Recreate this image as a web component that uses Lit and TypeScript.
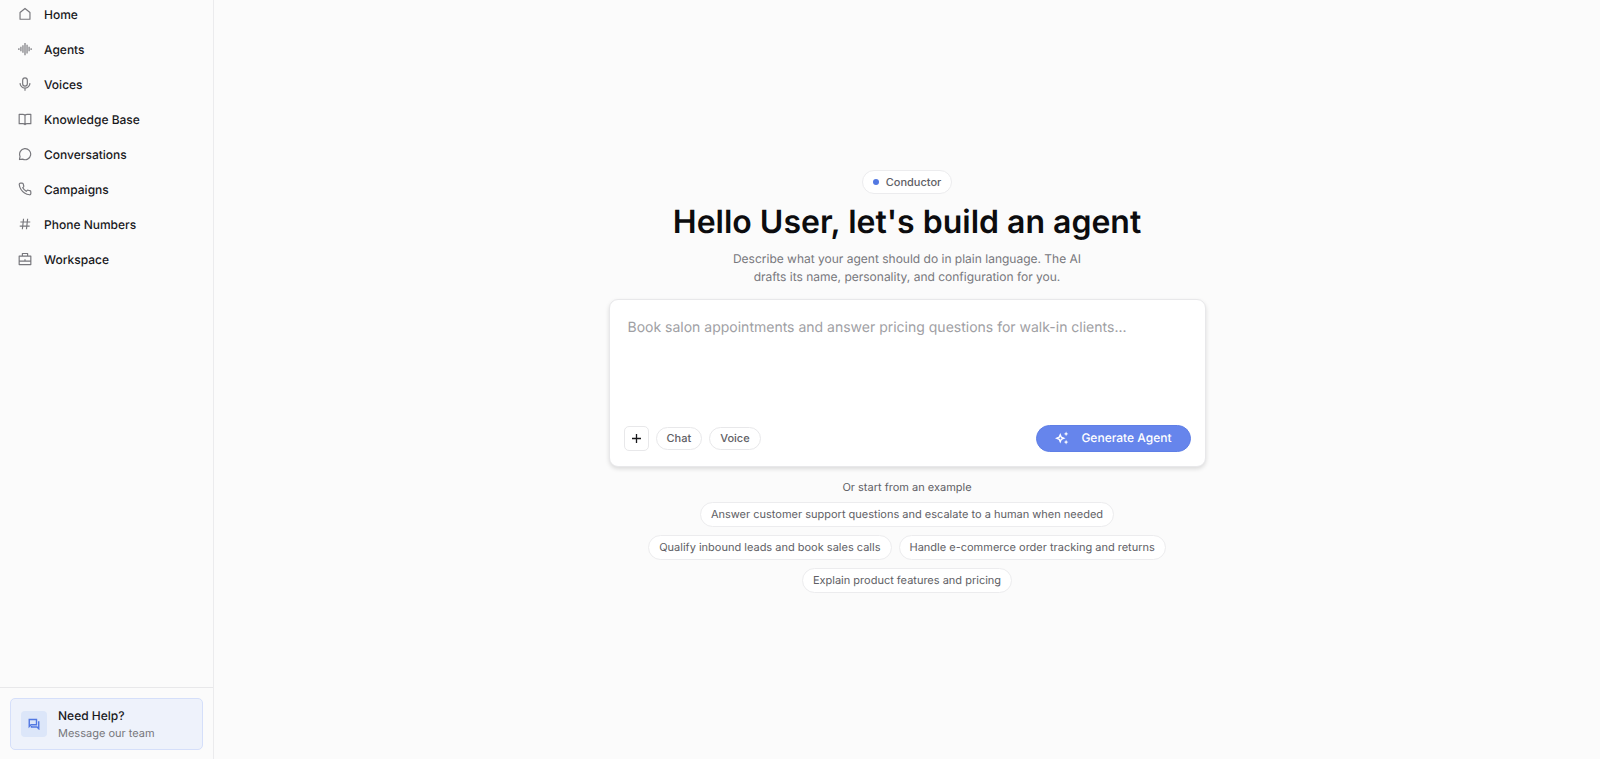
import { LitElement, html, css, svg } from "lit";
import { customElement, state } from "lit/decorators.js";

const icons = {
  home: svg`<path d="M3.500 21V9.500L12 2.500l8.500 7V21Z" />`,
  agents: svg`<path d="M1.500 10.500v3M5 8v8M8.500 5.500v13M12 1.500v21M15.500 4.500v15M19 8v8M22.500 10.500v3" />`,
  voices: svg`<rect x="8" y="1.500" width="8" height="14" rx="4" /><path d="M3.500 10.500a8.500 8.500 0 0 0 17 0M12 19v4.500" />`,
  book: svg`<path d="M12 21.500c-1-1.200-2-1.500-3.500-1.500H2V4h6.500C10.500 4 12 5 12 6.500C12 5 13.500 4 15.500 4H22v16h-6.500c-1.500 0-2.500.300-3.500 1.500ZM12 6.500v14" />`,
  chat: svg`<path d="M2.500 21.500 3.500 16A9.500 9.500 0 1 1 8 20.800Z" />`,
  phone: svg`<path d="M22 16.920v3a2 2 0 0 1-2.180 2 19.790 19.790 0 0 1-8.630-3.070 19.500 19.500 0 0 1-6-6 19.790 19.790 0 0 1-3.070-8.670A2 2 0 0 1 4.110 2h3a2 2 0 0 1 2 1.720 12.840 12.840 0 0 0 .7 2.810 2 2 0 0 1-.45 2.110L8.090 9.910a16 16 0 0 0 6 6l1.270-1.270a2 2 0 0 1 2.110-.45 12.840 12.840 0 0 0 2.810.7A2 2 0 0 1 22 16.920Z" />`,
  hash: svg`<path d="M9.500 3 7.500 21M16.500 3l-2 18M4 8.500h17M3 15.500h17" />`,
  case: svg`<path d="M2 7h20v14.500H2ZM7.500 7V2.500h9V7M2 15.500h20M12 12.500v3" />`,
};

const nav: [keyof typeof icons, string][] = [
  ["home", "Home"],
  ["agents", "Agents"],
  ["voices", "Voices"],
  ["book", "Knowledge Base"],
  ["chat", "Conversations"],
  ["phone", "Campaigns"],
  ["hash", "Phone Numbers"],
  ["case", "Workspace"],
];

const examples = [
  "Answer customer support questions and escalate to a human when needed",
  "Qualify inbound leads and book sales calls",
  "Handle e-commerce order tracking and returns",
  "Explain product features and pricing",
];

@customElement("app-sidebar")
export class AppSidebar extends LitElement {
  static styles = css`
    :host {
      display: flex;
      flex-direction: column;
      justify-content: space-between;
      box-sizing: border-box;
      border-right: 1px solid #ebebed;
    }
    .nav {
      display: flex;
      flex-direction: column;
      gap: 7px;
      padding: 0 10px;
    }
    .link {
      display: flex;
      align-items: center;
      gap: 12px;
      height: 28px;
      padding: 0 8px;
      border-radius: 6px;
      color: #18181b;
      font-size: 12px;
      font-weight: 500;
      text-decoration: none;
    }
    .icon {
      width: 14px;
      height: 14px;
      fill: none;
      stroke: #77777c;
      stroke-width: 2;
      stroke-linejoin: round;
    }
    .footer {
      padding: 10px 10px 9px;
      border-top: 1px solid #e8e8ea;
    }
    .help {
      display: flex;
      align-items: center;
      gap: 11px;
      padding: 8px 10px;
      border: 1px solid #d5dffa;
      border-radius: 5px;
      background: #eef2fb;
      color: #18181b;
      text-decoration: none;
    }
    .tile {
      display: grid;
      place-items: center;
      width: 26px;
      height: 26px;
      border-radius: 4px;
      background: #dce6f9;
    }
    .tile-icon {
      width: 12px;
      height: 12px;
      fill: none;
      stroke: #5278e2;
      stroke-width: 2.8;
    }
    .help-text {
      display: flex;
      flex-direction: column;
    }
    .help-title {
      font-size: 12px;
      font-weight: 500;
      line-height: 18px;
    }
    .help-sub {
      color: #77777c;
      font-size: 11px;
      line-height: 16px;
    }
  `;

  render() {
    return html`
      <nav class="nav" aria-label="Main">
        ${nav.map(
          ([icon, label]) => html`<a class="link" href="#">
            <svg class="icon" viewBox="0 0 24 24" aria-hidden="true">${icons[icon]}</svg>${label}
          </a>`
        )}
      </nav>
      <div class="footer">
        <a class="help" href="#">
          <span class="tile">
            <svg class="tile-icon" viewBox="0 0 24 24" aria-hidden="true">
              <path d="M2.500 17V3H17v10.500H6Z" />
              <path d="M20 8h1.500v13.500L18 18H7v-2" />
            </svg>
          </span>
          <span class="help-text">
            <span class="help-title">Need Help?</span>
            <span class="help-sub">Message our team</span>
          </span>
        </a>
      </div>
    `;
  }
}

@customElement("agent-composer")
export class AgentComposer extends LitElement {
  @state() prompt = "";

  static styles = css`
    :host {
      display: block;
    }
    .card {
      display: flex;
      flex-direction: column;
      border: 1px solid #e8e8ea;
      border-radius: 9px;
      background: #fff;
      box-shadow: 0 2px 4px rgba(0, 0, 0, 0.13);
    }
    .input {
      height: 93px;
      box-sizing: content-box;
      padding: 18px 18px 0;
      border: 0;
      outline: 0;
      resize: none;
      background: none;
      color: #18181b;
      font: 400 14px/20px Inter, sans-serif;
      text-rendering: geometricPrecision;
    }
    .input::placeholder {
      color: #a0a0a4;
    }
    .bar {
      display: flex;
      align-items: center;
      gap: 7px;
      padding: 14px;
    }
    button {
      display: flex;
      align-items: center;
      justify-content: center;
      box-sizing: border-box;
      margin: 0;
      border: 1px solid #e8e8ea;
      background: #fff;
      font: 500 11px/16px Inter, sans-serif;
      text-rendering: geometricPrecision;
      color: #606065;
    }
    .add {
      width: 25px;
      height: 25px;
      padding: 0;
      border-radius: 5px;
    }
    .add-icon {
      width: 9px;
      height: 9px;
      stroke: #18181b;
      stroke-width: 1.3;
    }
    .mode {
      height: 23px;
      padding: 0 10px;
      border-radius: 12px;
    }
    .generate {
      gap: 12px;
      height: 27px;
      margin-left: auto;
      padding: 0 18px;
      border-color: #5f7fe6;
      border-radius: 14px;
      background: #6685ec;
      color: #fff;
      font-size: 12px;
    }
    .spark {
      width: 14px;
      height: 14px;
      fill: #fff;
    }
    .spark-main {
      fill: none;
      stroke: #fff;
      stroke-width: 2.4;
    }
  `;

  render() {
    return html`
      <form class="card" @submit=${(e: Event) => e.preventDefault()}>
        <textarea
          class="input"
          aria-label="Agent description"
          placeholder="Book salon appointments and answer pricing questions for walk-in clients..."
          .value=${this.prompt}
          @input=${(e: Event) => (this.prompt = (e.target as HTMLTextAreaElement).value)}
        ></textarea>
        <div class="bar">
          <button class="add" type="button" aria-label="Add">
            <svg class="add-icon" viewBox="0 0 9 9" aria-hidden="true"><path d="M4.500 0v9M0 4.500h9" /></svg>
          </button>
          <button class="mode" type="button">Chat</button>
          <button class="mode" type="button">Voice</button>
          <button class="generate" type="submit">
            <svg class="spark" viewBox="0 0 24 24" aria-hidden="true">
              <path class="spark-main" d="M9 6.500l1.800 4.200L15 12.500 10.800 14.300 9 18.500l-1.800-4.200L3 12.500 7.200 10.700Z" />
              <path d="M19 1l1.200 2.800L23 5l-2.800 1.200L19 9l-1.200-2.800L15 5l2.800-1.200ZM19 15l1.200 2.800L23 19l-2.800 1.200L19 23l-1.200-2.800L15 19l2.800-1.200Z" />
            </svg>
            Generate Agent
          </button>
        </div>
      </form>
    `;
  }
}

@customElement("app-root")
export class AppRoot extends LitElement {
  static styles = css`
    :host {
      display: grid;
      grid-template-columns: 214px minmax(0, 1fr);
      min-height: 100vh;
      background: #fbfbfb;
      color: #18181b;
      font-family: Inter, sans-serif;
      text-rendering: geometricPrecision;
    }
    .main {
      display: flex;
      flex-direction: column;
      align-items: center;
      justify-content: center;
      padding: 3px 24px 0;
    }
    .badge {
      display: flex;
      align-items: center;
      gap: 7px;
      padding: 3px 10px;
      border: 1px solid #ececee;
      border-radius: 12px;
      background: #fff;
      color: #606065;
      font-size: 11px;
      font-weight: 500;
      line-height: 16px;
    }
    .dot {
      width: 6px;
      height: 6px;
      border-radius: 50%;
      background: #5278e2;
    }
    .title {
      margin: 8px 0;
      color: #0c0c0e;
      font-size: 32px;
      font-weight: 600;
      line-height: 40px;
      text-align: center;
    }
    .intro {
      max-width: 360px;
      margin: 0 0 13px;
      color: #77777c;
      font-size: 12px;
      line-height: 18px;
      text-align: center;
    }
    .composer {
      width: 100%;
      max-width: 597px;
    }
    .hint {
      margin: 12px 0 7px;
      color: #606065;
      font-size: 11px;
      line-height: 16px;
    }
    .examples {
      display: flex;
      flex-wrap: wrap;
      justify-content: center;
      gap: 8px 7px;
      max-width: 530px;
    }
    .example {
      box-sizing: border-box;
      height: 25px;
      padding: 0 10px;
      border: 1px solid #ececee;
      border-radius: 13px;
      background: #fff;
      color: #606065;
      font: 400 11px/16px Inter, sans-serif;
      text-rendering: geometricPrecision;
    }
  `;

  render() {
    return html`
      <app-sidebar></app-sidebar>
      <main class="main">
        <div class="badge"><span class="dot"></span>Conductor</div>
        <h1 class="title">Hello User, let's build an agent</h1>
        <p class="intro">
          Describe what your agent should do in plain language. The AI drafts its name, personality, and configuration
          for you.
        </p>
        <agent-composer class="composer"></agent-composer>
        <p class="hint">Or start from an example</p>
        <div class="examples">
          ${examples.map((text) => html`<button class="example" type="button">${text}</button>`)}
        </div>
      </main>
    `;
  }
}
